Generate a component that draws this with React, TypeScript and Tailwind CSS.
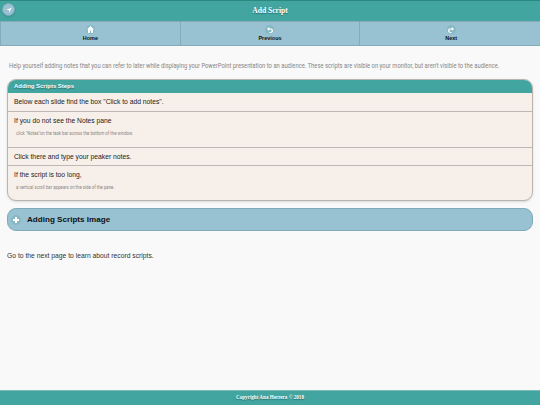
import React from "react";

const navItems = [
  { title: "Home", icon: "home" },
  { title: "Previous", icon: "back" },
  { title: "Next", icon: "forward" },
];

const steps = [
  { title: 'Below each slide find the box "Click to add notes".' },
  {
    title: "If you do not see the Notes pane",
    note: 'click "Notes"on the task bar across the bottom of the window.',
  },
  { title: "Click there and type your peaker notes." },
  {
    title: "If the script is too long,",
    note: "a vertical scroll bar appears on the side of the pane.",
  },
];

const NavIcon = ({ name }: { name: string }) => {
  if (name === "home") {
    return (
      <svg viewBox="0 0 14 14" className="size-[7px]" fill="#fff">
        <path d="M7 0 0 7h2v7h4V9h2v5h4V7h2z" />
      </svg>
    );
  }
  return (
    <svg
      viewBox="0 0 14 14"
      className={name === "forward" ? "size-[6px] -scale-x-100" : "size-[6px]"}
    >
      <path d="M5 0 0 4.500 5 9V6c4-.5 6 .5 6 2.500S9 12 5 12v2c6 0 9-2 9-5.500S11 3 5 3z" fill="#fff" />
    </svg>
  );
};

const App = () => {
  return (
    <div className="flex h-[405px] w-[540px] flex-col overflow-hidden bg-[#f9f9f9] font-['Liberation_Sans',sans-serif] text-[#333]">
      <header className="grid h-[21px] grid-cols-[20px_1fr_20px] items-start border-t border-[#2b8880] bg-[#42a5a0]">
        <button className="mt-[2px] ml-[2px] flex size-[13px] items-center justify-center rounded-full border border-[#7eabb9] bg-[#98c2d1] shadow-sm">
          <svg viewBox="0 0 14 14" className="size-[6px]" fill="#fff">
            <path d="M14 1 0 7h7v6z" />
          </svg>
        </button>
        <h1 className="pt-[4px] text-center font-['Liberation_Serif',serif] text-[7.600px] leading-[12px] font-bold text-white [text-shadow:0_1px_1px_#286d68]">
          Add Script
        </h1>
      </header>

      <nav className="grid h-[25px] grid-cols-3 border-b border-l border-[#84abb7]">
        {navItems.map((item, index) => (
          <a
            key={item.title}
            className={`flex flex-col items-center border-t border-[#84abb7] bg-[#98c2d1] pt-[3px] ${index < 2 ? "border-r" : "pl-[2px]"}`}
          >
            <span className="flex size-[9px] items-center justify-center rounded-full bg-[#87b9c5]">
              <NavIcon name={item.icon} />
            </span>
            <span className="text-[5.500px] leading-[8px] font-bold text-[#111]">{item.title}</span>
          </a>
        ))}
      </nav>

      <main className="flex-1 px-[7px]">
        <p className="mt-[15px] ml-[2px] h-[11px] origin-left scale-x-[0.833] font-[Roboto,sans-serif] text-[7px] leading-[11px] whitespace-nowrap text-[#858585]">
          Help yourself adding notes that you can refer to later while displaying your PowerPoint
          presentation to an audience. These scripts are visible on your monitor, but aren't visible to
          the audience.
        </p>

        <section className="mt-[7px] h-[122px] overflow-hidden rounded-[9px] border border-[#b9b4af] bg-[#f7f0ea] shadow-sm">
          <h2 className="-mx-px -mt-px h-[14px] border-t border-[#318b85] bg-[#42a5a0] pl-[7px] text-[5.950px] leading-[13px] font-bold text-white [text-shadow:0_1px_1px_#286d68]">
            Adding Scripts Steps
          </h2>
          <ul>
            {steps.map((step, index) => (
              <li
                key={index}
                className={`pl-[6px] ${step.note ? "h-[36px]" : "h-[18px]"} ${index > 0 ? "border-t border-[#bcb8b4]" : ""}`}
              >
                <h3 className="pt-[3px] text-[6.750px] leading-[12px] text-[#222]">{step.title}</h3>
                {step.note && (
                  <p className="ml-[2px] origin-left scale-x-[0.955] pt-[3px] font-[Roboto,sans-serif] text-[4.500px] leading-[8px] whitespace-nowrap text-[#8b8580]">
                    {step.note}
                  </p>
                )}
              </li>
            ))}
          </ul>
        </section>

        <button className="mt-[7px] flex h-[23px] w-full items-center rounded-[9px] border border-[#7eabb7] bg-[#98c2d1] pl-[3px] text-[8.100px] text-[#111]">
          <span className="mr-[6px] flex size-[10px] items-center justify-center rounded-full bg-[#87b9c5]">
            <svg viewBox="0 0 6 6" className="size-[6px]" fill="#fff">
              <path d="M2 0h2v2h2v2H4v2H2V4H0V2h2z" />
            </svg>
          </span>
          <span className="pt-px font-bold">Adding Scripts Image</span>
        </button>

        <p className="mt-[19px] text-[6.750px] leading-[12px]">
          Go to the next page to learn about record scripts.
        </p>
      </main>

      <footer className="h-[15px] border-t border-[#79bbb5] bg-[#42a5a0] text-center font-['Liberation_Serif',serif] text-[5.100px] leading-[13px] font-bold text-white [text-shadow:0_1px_1px_#286d68]">
        Copyright Ana Herrera © 2018
      </footer>
    </div>
  );
};

export default App;
